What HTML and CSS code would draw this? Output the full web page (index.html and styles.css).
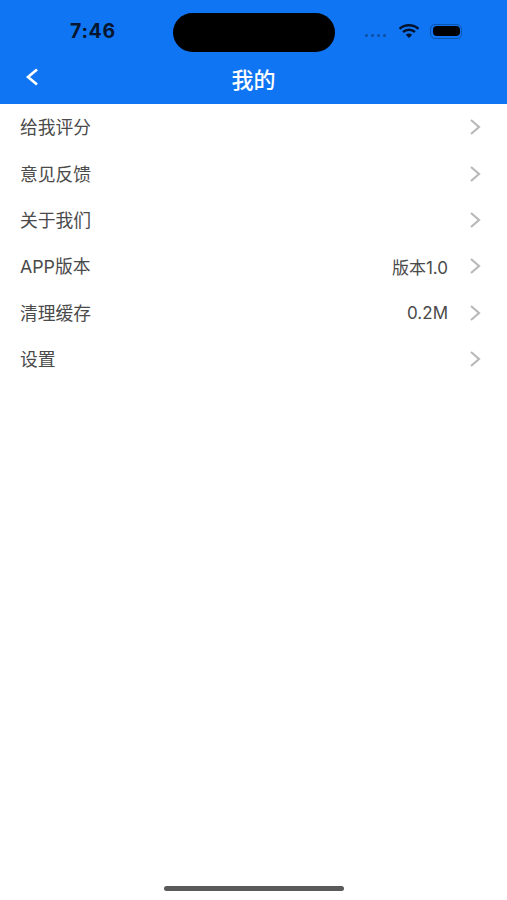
FILE: index.html
```html
<!DOCTYPE html>
<html lang="zh-CN">
<head>
<meta charset="utf-8">
<title>我的</title>
<link rel="stylesheet" href="styles.css">
</head>
<body>
<div class="screen">
  <header class="header">
    <div class="status">
      <span class="time">7:46</span>
      <span class="island"></span>
      <div class="status-icons">
        <span class="dots"><i></i><i></i><i></i><i></i></span>
        <svg class="wifi" width="22" height="16" viewBox="0 0 22 16"><path d="M1.5 5.8C6.8 1 15.2 1 20.5 5.8" fill="none" stroke="#04132b" stroke-width="2.4"/><path d="M5 9C8.4 6 13.6 6 17 9" fill="none" stroke="#04132b" stroke-width="2.4"/><path d="M7.8 11.8 11 15l3.2-3.2C12.4 10.2 9.6 10.2 7.8 11.8z" fill="#04132b"/></svg>
        <span class="battery"><span class="battery-fill"></span></span>
      </div>
    </div>
    <div class="nav">
      <svg class="back" width="16" height="20" viewBox="0 0 16 20"><path d="M13 2.5 4 10l9 7.5" fill="none" stroke="#fff" stroke-width="2.6"/></svg>
      <span class="title">我的</span>
    </div>
  </header>
  <main class="list">
    <div class="row"><span class="label">给我评分</span><svg class="chev" width="12" height="18" viewBox="0 0 12 18"><path d="M2 2l8 7-8 7" fill="none" stroke="#b9b9b9" stroke-width="2.2"/></svg></div>
    <div class="row"><span class="label">意见反馈</span><svg class="chev" width="12" height="18" viewBox="0 0 12 18"><path d="M2 2l8 7-8 7" fill="none" stroke="#b9b9b9" stroke-width="2.2"/></svg></div>
    <div class="row"><span class="label">关于我们</span><svg class="chev" width="12" height="18" viewBox="0 0 12 18"><path d="M2 2l8 7-8 7" fill="none" stroke="#b9b9b9" stroke-width="2.2"/></svg></div>
    <div class="row"><span class="label">APP版本</span><span class="value">版本1.0</span><svg class="chev" width="12" height="18" viewBox="0 0 12 18"><path d="M2 2l8 7-8 7" fill="none" stroke="#b9b9b9" stroke-width="2.2"/></svg></div>
    <div class="row"><span class="label">清理缓存</span><span class="value">0.2M</span><svg class="chev" width="12" height="18" viewBox="0 0 12 18"><path d="M2 2l8 7-8 7" fill="none" stroke="#b9b9b9" stroke-width="2.2"/></svg></div>
    <div class="row"><span class="label">设置</span><svg class="chev" width="12" height="18" viewBox="0 0 12 18"><path d="M2 2l8 7-8 7" fill="none" stroke="#b9b9b9" stroke-width="2.2"/></svg></div>
  </main>
  <div class="home-bar"></div>
</div>
</body>
</html>
```
FILE: styles.css
```css
* { box-sizing: border-box; }
html, body { margin: 0; padding: 0; background: #fff; }
body { font-family: Inter, "Noto Sans CJK SC", sans-serif; }
.screen { position: relative; width: 507px; height: 900px; overflow: hidden; background: #fff; }
.header { height: 104px; background: #1075f2; display: flex; flex-direction: column; }
.status { height: 62px; position: relative; padding: 0 45px 0 70px; display: flex; justify-content: space-between; align-items: center; }
.time { font-size: 19.5px; font-weight: 700; color: #07162e; letter-spacing: 0.7px; }
.island { position: absolute; left: 173px; top: 13px; width: 162px; height: 39px; border-radius: 20px; background: #000; }
.status-icons { display: flex; align-items: center; }
.dots { display: flex; gap: 3px; margin-right: 12px; margin-top: 9px; }
.dots i { width: 3px; height: 3px; border-radius: 50%; background: #0d4f9f; }
.wifi { margin-right: 10px; }
.battery { width: 32px; height: 15px; border-radius: 5px; border: 1px solid #0b55ad; padding: 1.5px; display: flex; }
.battery-fill { flex: 1; border-radius: 4px; background: #000; }
.nav { flex: 1; position: relative; display: flex; align-items: center; justify-content: center; padding-bottom: 6px; }
.back { position: absolute; left: 24px; top: 5px; }
.title { font-size: 22px; line-height: 26px; color: #fff; font-weight: 500; }
.list { display: flex; flex-direction: column; }
.row { height: 46.4px; display: flex; align-items: center; padding: 0 26px 0 20px; }
.label { flex: 1; font-size: 17.8px; color: #4a4a4a; padding-bottom: 2px; }
.value { font-size: 17px; color: #4a4a4a; margin-right: 21px; }
.chev { flex: none; }
.home-bar { position: absolute; left: 164px; top: 886px; width: 180px; height: 5px; border-radius: 3px; background: #5a5a5a; }
```
